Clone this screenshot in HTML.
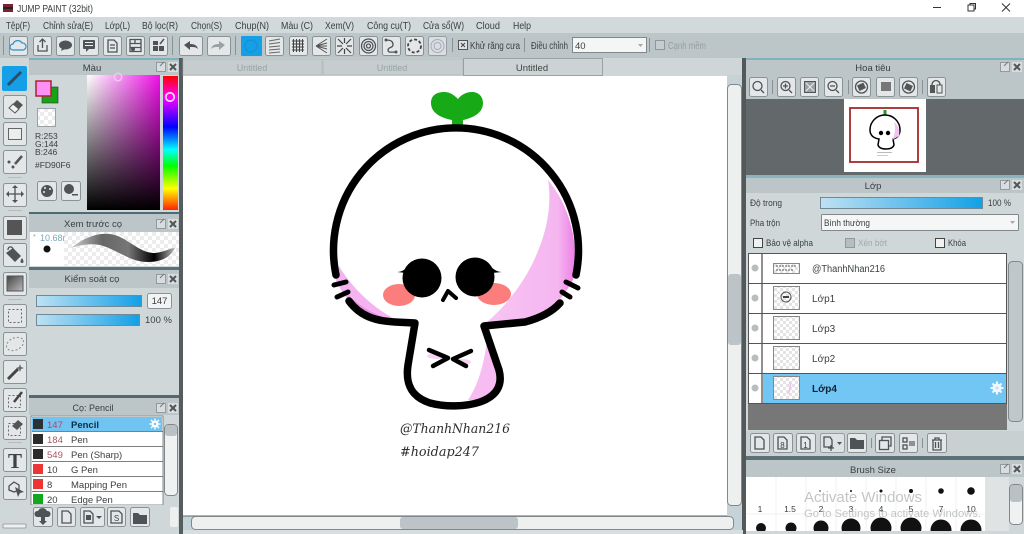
<!DOCTYPE html>
<html><head><meta charset="utf-8"><title>JUMP PAINT</title>
<style>
html,body{margin:0;padding:0;width:1024px;height:534px;overflow:hidden;background:#d0d7d8}
svg{display:block;filter:blur(.35px)}
text{font-family:"Liberation Sans","DejaVu Sans",sans-serif;font-size:10px;fill:#3a3f42}
.b{fill:#e3e7e8;stroke:#8a9295;stroke-width:1}
.i{fill:none;stroke:#4d5356;stroke-width:1.3}
.f{fill:#4d5356}
.c{text-anchor:middle}
.s{fill:none;stroke:#000;stroke-linecap:round;stroke-linejoin:round}
</style></head><body>
<svg width="1024" height="534" viewBox="0 0 1024 534" xmlns="http://www.w3.org/2000/svg">
<defs>
<pattern id="ch" width="8" height="8" patternUnits="userSpaceOnUse"><rect width="8" height="8" fill="#fff"/><rect width="4" height="4" fill="#ececec"/><rect x="4" y="4" width="4" height="4" fill="#ececec"/></pattern>
<pattern id="ch2" width="6" height="6" patternUnits="userSpaceOnUse"><rect width="6" height="6" fill="#fff"/><rect width="3" height="3" fill="#e4e4e4"/><rect x="3" y="3" width="3" height="3" fill="#e4e4e4"/></pattern>
<linearGradient id="sl" x1="0" x2="1" y1="0" y2="0"><stop offset="0" stop-color="#bfe1f3"/><stop offset="1" stop-color="#12a0e6"/></linearGradient>
<linearGradient id="sv1" x1="0" x2="1" y1="0" y2="0"><stop offset="0" stop-color="#fff"/><stop offset="1" stop-color="#f010e8"/></linearGradient>
<linearGradient id="sv2" x1="0" x2="0" y1="0" y2="1"><stop offset="0" stop-color="#000" stop-opacity="0"/><stop offset="1" stop-color="#000"/></linearGradient>
<linearGradient id="hue" x1="0" x2="0" y1="0" y2="1"><stop offset="0" stop-color="#f00"/><stop offset=".16" stop-color="#f0f"/><stop offset=".38" stop-color="#00f"/><stop offset=".55" stop-color="#0ff"/><stop offset=".67" stop-color="#0f0"/><stop offset=".84" stop-color="#ff0"/><stop offset="1" stop-color="#f20"/></linearGradient>
<linearGradient id="st" x1="0" x2="1" y1="0" y2="0"><stop offset="0" stop-color="#ccc"/><stop offset=".3" stop-color="#666"/><stop offset=".55" stop-color="#777"/><stop offset=".8" stop-color="#000"/><stop offset="1" stop-color="#bbb"/></linearGradient>
<linearGradient id="gr" x1="0" x2="1" y1="0" y2="1"><stop offset="0" stop-color="#444"/><stop offset="1" stop-color="#bbb"/></linearGradient>
<linearGradient id="pk" x1="0" x2="1" y1="0" y2="0"><stop offset="0" stop-color="#f8c4f4"/><stop offset=".8" stop-color="#f5b6f0"/><stop offset="1" stop-color="#ec80e6"/></linearGradient>
</defs>

<!-- title bar -->
<rect width="1024" height="17" fill="#fff"/>
<rect x="3" y="4" width="10" height="8" fill="#7a2230"/><rect x="3" y="7" width="10" height="2" fill="#222"/>
<text x="17" y="12" textLength="76" lengthAdjust="spacingAndGlyphs" style="font-size:10.5px" fill="#222">JUMP PAINT (32bit)</text>
<rect x="933" y="7" width="8" height="1" fill="#333"/>
<rect x="968" y="5" width="6" height="6" fill="none" stroke="#333"/><path d="M970 5V3.500H975.500V9H974" fill="none" stroke="#333"/>
<path d="M1002 3.500L1010 11.500M1010 3.500L1002 11.500" stroke="#333" fill="none"/>

<!-- menu -->
<rect y="17" width="1024" height="16" fill="#d2d9da"/>
<g>
<text x="6" y="29" textLength="24" lengthAdjust="spacingAndGlyphs">Tệp(F)</text>
<text x="43" y="29" textLength="50" lengthAdjust="spacingAndGlyphs">Chỉnh sửa(E)</text>
<text x="105" y="29" textLength="25" lengthAdjust="spacingAndGlyphs">Lớp(L)</text>
<text x="142" y="29" textLength="36" lengthAdjust="spacingAndGlyphs">Bộ lọc(R)</text>
<text x="191" y="29" textLength="31" lengthAdjust="spacingAndGlyphs">Chọn(S)</text>
<text x="235" y="29" textLength="34" lengthAdjust="spacingAndGlyphs">Chụp(N)</text>
<text x="281" y="29" textLength="32" lengthAdjust="spacingAndGlyphs">Màu (C)</text>
<text x="325" y="29" textLength="29" lengthAdjust="spacingAndGlyphs">Xem(V)</text>
<text x="367" y="29" textLength="44" lengthAdjust="spacingAndGlyphs">Công cụ(T)</text>
<text x="423" y="29" textLength="41" lengthAdjust="spacingAndGlyphs">Cửa sổ(W)</text>
<text x="476" y="29" textLength="24" lengthAdjust="spacingAndGlyphs">Cloud</text>
<text x="513" y="29" textLength="18" lengthAdjust="spacingAndGlyphs">Help</text>
</g>

<!-- toolbar -->
<rect y="33" width="1024" height="25" fill="#bcc5c8"/>
<rect x="3" y="36" width="1" height="19" fill="#8a9295"/><rect x="172" y="36" width="1" height="19" fill="#8a9295"/><rect x="235" y="36" width="1" height="19" fill="#8a9295"/>
<rect class="b" x="9.500" y="36.500" width="18" height="19" rx="2"/>
<path d="M13 50a3 3 0 0 1 0-6a5 5 0 0 1 9-1a3.500 3.500 0 0 1 1 7z" fill="none" stroke="#2a90c8" stroke-width="1.2"/>
<rect class="b" x="33.500" y="36.500" width="18" height="19" rx="2"/>
<path class="i" d="M38 45v6h9v-6M42.500 48v-9M39.500 42l3-3 3 3"/>
<rect class="b" x="56.500" y="36.500" width="18" height="19" rx="2"/>
<ellipse class="f" cx="65.500" cy="45" rx="6.500" ry="4.500"/><path class="f" d="M62 48l-1 3 4-2z"/>
<rect class="b" x="79.500" y="36.500" width="19" height="19" rx="2"/>
<rect class="f" x="83" y="40" width="12" height="9" rx="1"/><path class="f" d="M86 49l0 3 3-3z"/><rect x="85" y="42" width="8" height="1" fill="#eee"/><rect x="85" y="45" width="8" height="1" fill="#eee"/>
<rect class="b" x="103.500" y="36.500" width="18" height="19" rx="2"/>
<path class="i" d="M108 40h6l3 3v9h-9zM110 45h5M110 48h5"/>
<rect class="b" x="126.500" y="36.500" width="18" height="19" rx="2"/>
<path class="i" d="M130 39.500h11v12h-11zM130 43.500h11M130 47.500h11M135 39.500v4"/><circle class="f" cx="133" cy="49" r="2"/>
<rect class="b" x="149.500" y="36.500" width="18" height="19" rx="2"/>
<path class="f" d="M153 41h5v4h-5zM153 46h5v5h-5zM159 46h5v5h-5z"/><path d="M160 44l4-5" stroke="#4d5356" stroke-width="1.500"/>

<rect class="b" x="179.500" y="36.500" width="23" height="19" rx="2"/>
<path class="f" d="M184 45l6-4v3c4 0 7 1 8 5-2-2-4-2-8-2v3z"/>
<rect class="b" x="207.500" y="36.500" width="23" height="19" rx="2"/>
<path fill="#9aa2a5" d="M225 45l-6-4v3c-4 0-7 1-8 5 2-2 4-2 8-2v3z"/>

<rect x="241" y="36" width="21" height="20" rx="1" fill="#149fe6"/><circle cx="251" cy="46" r="6" fill="none" stroke="#1b8ccc"/>
<rect class="b" x="265.500" y="36.500" width="18" height="19" rx="2"/>
<path d="M269 41l11-2M269 44l11-1.500M269 47l11-1M269 50l11-1M269 53l11-1" stroke="#666" fill="none"/>
<rect class="b" x="289.500" y="36.500" width="18" height="19" rx="2"/>
<path d="M292 41h12M292 44h12M292 47h12M292 50h12M293.500 39v13M296.500 39v13M299.500 39v13M302.500 39v13" stroke="#444" fill="none"/>
<rect class="b" x="312.500" y="36.500" width="18" height="19" rx="2"/>
<path d="M316 46l11-7M316 46l11-3M316 46h11M316 46l11 3M316 46l11 7" stroke="#555" fill="none"/>
<rect class="b" x="335.500" y="36.500" width="18" height="19" rx="2"/>
<path d="M338 39l5 5M351 39l-5 5M338 53l5-5M351 53l-5-5M344.500 38v5M344.500 49v5M337 46h5M347 46h5" stroke="#444" stroke-width="1.200" fill="none"/>
<rect class="b" x="359.500" y="36.500" width="18" height="19" rx="2"/>
<circle cx="368.500" cy="46" r="7" class="i"/><circle cx="368.500" cy="46" r="4.500" class="i"/><circle cx="368.500" cy="46" r="2" class="i"/>
<rect class="b" x="382.500" y="36.500" width="18" height="19" rx="2"/>
<path class="i" d="M386 40c6 0 7 2 7 5s-5 2-5 5 3 2 8 2"/><circle class="f" cx="386" cy="40" r="1.500"/><circle class="f" cx="396" cy="52" r="1.500"/>
<rect class="b" x="405.500" y="36.500" width="18" height="19" rx="2"/>
<circle cx="414.500" cy="46" r="6.500" fill="none" stroke="#444" stroke-width="1.800" stroke-dasharray="3 2"/>
<rect class="b" x="428.500" y="36.500" width="18" height="19" rx="2" style="opacity:.75"/>
<circle cx="437.500" cy="46" r="6.500" fill="none" stroke="#aab" /><circle cx="437.500" cy="46" r="3.500" fill="none" stroke="#aab"/>

<rect x="452" y="38" width="1" height="14" fill="#8a9295"/>
<rect x="458.500" y="40.500" width="9" height="9" fill="#dfe4e5" stroke="#555"/><path d="M461 43l4 4M465 43l-4 4" stroke="#444"/>
<text x="470" y="49" textLength="50" lengthAdjust="spacingAndGlyphs">Khử răng cưa</text>
<rect x="524" y="38" width="1" height="14" fill="#8a9295"/>
<text x="531" y="49" textLength="37" lengthAdjust="spacingAndGlyphs">Điều chỉnh</text>
<rect x="572.500" y="37.500" width="74" height="15" fill="#f4f5f5" stroke="#80888b"/>
<text x="575" y="49" style="font-size:9.500px">40</text>
<path d="M638 44l2.500 3 2.500-3z" fill="#aaa"/>
<rect x="649" y="38" width="1" height="14" fill="#8a9295"/>
<rect x="655.500" y="40.500" width="9" height="9" fill="#c6cdd0" stroke="#8f979a"/>
<text x="668" y="49" textLength="38" lengthAdjust="spacingAndGlyphs" style="fill:#959da0">Cạnh mềm</text>

<!-- left tools column -->
<rect x="0" y="58" width="29" height="476" fill="#d0d7d8"/>
<rect x="2" y="66" width="25" height="25" rx="2" fill="#149fe6"/>
<path d="M8 85l13-13" stroke="#2c4d66" stroke-width="3"/>
<g>
<rect class="b" x="3.500" y="95.500" width="23" height="23" rx="2"/>
<path d="M9 108l8-8 6 5-8 8z" fill="#555"/><path d="M9 108l4-4 6 5-4 4z" fill="#f2f2f2" stroke="#555"/>
<rect class="b" x="3.500" y="122.500" width="23" height="23" rx="2"/>
<rect x="8.500" y="128.500" width="13" height="11" fill="#eceeee" stroke="#666"/>
<rect class="b" x="3.500" y="150.500" width="23" height="23" rx="2"/>
<path d="M22 156l-7 8" stroke="#555" stroke-width="2.500"/><circle class="f" cx="9" cy="162" r="1.500"/><circle class="f" cx="13" cy="167" r="1.500"/>
<rect x="8" y="177" width="14" height="1" fill="#bbb"/>
<rect class="b" x="3.500" y="183.500" width="23" height="23" rx="2"/>
<path class="i" d="M15 187v14M8 194h14" stroke-width="1.500"/><path class="f" d="M15 185l3 3h-6zM15 203l3-3h-6zM6 194l3-3v6zM24 194l-3-3v6z"/>
<rect x="8" y="210" width="14" height="1" fill="#bbb"/>
<rect class="b" x="3.500" y="216.500" width="23" height="23" rx="2"/>
<rect x="7" y="220" width="15" height="15" fill="#555"/>
<rect class="b" x="3.500" y="243.500" width="23" height="23" rx="2"/>
<path class="f" d="M6 253l7-5 8 8-6 6z"/><path d="M8 250c0-4 4-4 5-1" class="i"/><path class="f" d="M22 258c2 3 2 5 0 5s-2-2 0-5z"/>
<rect class="b" x="3.500" y="272.500" width="23" height="23" rx="2"/>
<rect x="7" y="276" width="16" height="15" fill="url(#gr)" stroke="#555"/>
<rect x="8" y="299" width="14" height="1" fill="#bbb"/>
<rect class="b" x="3.500" y="304.500" width="23" height="23" rx="2"/>
<rect x="8.500" y="309.500" width="13" height="13" fill="none" stroke="#666" stroke-dasharray="2 2"/>
<rect class="b" x="3.500" y="332.500" width="23" height="23" rx="2"/>
<ellipse cx="15" cy="344" rx="9" ry="6" fill="none" stroke="#888" stroke-dasharray="2 2" transform="rotate(-25 15 344)"/>
<rect class="b" x="3.500" y="360.500" width="23" height="23" rx="2"/>
<path d="M8 379l10-10" stroke="#444" stroke-width="3"/><path d="M20 364l1 3 3 1-3 1-1 3-1-3-3-1 3-1z" fill="#666"/>
<rect class="b" x="3.500" y="388.500" width="23" height="23" rx="2"/>
<rect x="8.500" y="395.500" width="12" height="12" fill="none" stroke="#666" stroke-dasharray="2 2"/><path d="M14 402l8-10" stroke="#444" stroke-width="2.500"/>
<rect class="b" x="3.500" y="416.500" width="23" height="23" rx="2"/>
<rect x="8.500" y="423.500" width="12" height="12" fill="none" stroke="#666" stroke-dasharray="2 2"/><path d="M12 426l6-6 5 4-6 6z" fill="#555"/>
<rect x="8" y="442" width="14" height="1" fill="#bbb"/>
<rect class="b" x="3.500" y="448.500" width="23" height="23" rx="2"/>
<text x="15" y="468" class="c" style="font-family:'Liberation Serif',serif;font-size:21px;font-weight:bold;fill:#3d4245">T</text>
<rect class="b" x="3.500" y="476.500" width="23" height="23" rx="2"/>
<path class="i" d="M9 486l5-4 5 3 0 5-5 2-5-2z"/><path class="f" d="M15 487l9 5-4 1-2 4z"/>
<rect x="3" y="524" width="23" height="4" rx="1" fill="#eef0f0" stroke="#8a9295" stroke-width=".8"/>
</g>

<!-- left panels -->
<rect x="29" y="58" width="150" height="476" fill="#d0d7d8"/>
<rect x="29" y="58" width="150" height="2" fill="#7fb2bd"/>
<rect x="29" y="60" width="150" height="15" fill="#bcc5c8"/>
<rect x="179" y="58" width="4" height="476" fill="#575c5f"/>
<text x="92" y="71" class="c" style="font-size:9.500px">Màu</text>
<rect x="156.500" y="62.500" width="9" height="9" fill="#d8dddf" stroke="#929a9d"/><path d="M160 66l4-4" stroke="#777"/>
<rect x="168" y="62" width="10" height="10" fill="#d8dddf"/><path d="M170 64l6 6M176 64l-6 6" stroke="#555" stroke-width="2"/>

<rect x="42" y="87" width="16" height="16" fill="#16a316" stroke="#333" stroke-width=".6"/>
<rect x="36" y="81" width="15" height="15" fill="#fd90f6" stroke="#b02030" stroke-width="1.500"/>
<rect x="37.500" y="108.500" width="18" height="18" fill="url(#ch)" stroke="#9aa2a5"/>
<g>
<text x="35" y="139" style="font-size:8.500px">R:253</text>
<text x="35" y="147" style="font-size:8.500px">G:144</text>
<text x="35" y="155" style="font-size:8.500px">B:246</text>
<text x="35" y="168" style="font-size:8.500px">#FD90F6</text>
</g>
<rect class="b" x="37.500" y="181.500" width="19" height="19" rx="2"/>
<circle class="f" cx="47" cy="191" r="6"/><circle cx="45" cy="188" r="1" fill="#eee"/><circle cx="50" cy="189" r="1" fill="#eee"/><circle cx="44" cy="192" r="1" fill="#eee"/>
<rect class="b" x="61.500" y="181.500" width="19" height="19" rx="2"/>
<circle class="f" cx="69" cy="189" r="5"/><rect x="72" y="194" width="6" height="1.500" fill="#4d5356"/>

<rect x="87" y="75" width="73" height="135" fill="url(#sv1)"/>
<rect x="87" y="75" width="73" height="135" fill="url(#sv2)"/>
<circle cx="118" cy="77" r="3.800" fill="none" stroke="#f0c8ee" stroke-width="1.500"/>
<rect x="163" y="76" width="15" height="134" fill="url(#hue)"/>
<circle cx="170" cy="97" r="4.200" fill="none" stroke="#f5d8f5" stroke-width="1.800"/>

<rect x="29" y="212" width="150" height="2" fill="#4f6a72"/>
<rect x="29" y="214" width="150" height="18" fill="#bcc5c8"/>
<text x="93" y="227" class="c" style="font-size:9.500px">Xem trước cọ</text>
<rect x="156.500" y="219.500" width="9" height="9" fill="#d8dddf" stroke="#929a9d"/><path d="M160 223l4-4" stroke="#777"/>
<rect x="168" y="219" width="10" height="10" fill="#d8dddf"/><path d="M170 221l6 6M176 221l-6 6" stroke="#555" stroke-width="2"/>
<rect x="64" y="232" width="115" height="34" fill="url(#ch)"/>
<rect x="30" y="232" width="34" height="34" fill="#fff"/>
<text x="33" y="239" style="font-size:7px;fill:#7aa">*</text>
<text x="40" y="241" style="font-size:9px;fill:#79a8b8">10.68r</text>
<circle cx="47" cy="249" r="3.500" fill="#111"/>
<path d="M71 248C85 237 100 231 115 235C130 240 140 253 155 253C165 252 170 248 175 248C170 258 160 262 148 262C130 262 118 250 100 245C90 243 80 245 71 248Z" fill="url(#st)"/>

<rect x="29" y="267" width="150" height="3" fill="#56737b"/>
<rect x="29" y="270" width="150" height="18" fill="#bcc5c8"/>
<text x="92" y="282" class="c" style="font-size:9.500px">Kiểm soát cọ</text>
<rect x="156.500" y="274.500" width="9" height="9" fill="#d8dddf" stroke="#929a9d"/><path d="M160 278l4-4" stroke="#777"/>
<rect x="168" y="274" width="10" height="10" fill="#d8dddf"/><path d="M170 276l6 6M176 276l-6 6" stroke="#555" stroke-width="2"/>
<rect x="36.500" y="295.500" width="105" height="11" fill="url(#sl)" stroke="#6e8a99"/>
<rect x="147.500" y="293.500" width="24" height="15" rx="2" fill="#f2f3f3" stroke="#8a9295"/>
<text x="159.500" y="304" class="c" style="font-size:9.500px">147</text>
<rect x="36.500" y="314.500" width="103" height="11" fill="url(#sl)" stroke="#6e8a99"/>
<text x="145" y="323" style="font-size:9.500px" textLength="27">100 %</text>

<rect x="29" y="395" width="150" height="3" fill="#56686e"/>
<rect x="29" y="398" width="150" height="17" fill="#bcc5c8"/>
<text x="93" y="411" class="c" style="font-size:9px">Cọ: Pencil</text>
<rect x="156.500" y="403.500" width="9" height="9" fill="#d8dddf" stroke="#929a9d"/><path d="M160 407l4-4" stroke="#777"/>
<rect x="168" y="403" width="10" height="10" fill="#d8dddf"/><path d="M170 405l6 6M176 405l-6 6" stroke="#555" stroke-width="2"/>

<rect x="31" y="416" width="132" height="89" fill="#fff" stroke="#6d7477" stroke-width=".8"/>
<rect x="32" y="417" width="130" height="14" fill="#70c4f2"/>
<path d="M32 431.500h131M32 446.500h131M32 461.500h131M32 476.500h131M32 491.500h131" stroke="#555" stroke-width=".8"/>
<rect x="33" y="419" width="10" height="10" fill="#2b3135"/><rect x="33" y="434" width="10" height="10" fill="#2b2b2b"/><rect x="33" y="449" width="10" height="10" fill="#2b2b2b"/>
<rect x="33" y="464" width="10" height="10" fill="#ee3535"/><rect x="33" y="479" width="10" height="10" fill="#ee3535"/><rect x="33" y="494" width="10" height="10" fill="#12a81e"/>
<text x="47" y="428" style="font-size:9.500px;fill:#b5446a">147</text><text x="71" y="428" style="font-size:9.500px;font-weight:bold;fill:#0d2c44">Pencil</text>
<text x="47" y="443" style="font-size:9.500px;fill:#a8555f">184</text><text x="71" y="443" style="font-size:9.500px">Pen</text>
<text x="47" y="458" style="font-size:9.500px;fill:#a8555f">549</text><text x="71" y="458" style="font-size:9.500px">Pen (Sharp)</text>
<text x="47" y="473" style="font-size:9.500px">10</text><text x="71" y="473" style="font-size:9.500px">G Pen</text>
<text x="47" y="488" style="font-size:9.500px">8</text><text x="71" y="488" style="font-size:9.500px">Mapping Pen</text>
<text x="47" y="503" style="font-size:9.500px">20</text><text x="71" y="503" style="font-size:9.500px">Edge Pen</text>
<circle cx="155" cy="424" r="3.500" fill="#fff"/><path d="M155 418.500v11M149.500 424h11M151 420l8 8M159 420l-8 8" stroke="#fff" stroke-width="1.300"/><circle cx="155" cy="424" r="1.200" fill="#70c4f2"/>
<rect x="164.500" y="424.500" width="13" height="71" rx="4" fill="#f0f1f1" stroke="#80888b"/>
<rect x="165" y="425" width="12" height="11" rx="3" fill="#b9c1c4"/>
<rect x="170" y="507" width="8" height="20" rx="2" fill="#eef0f0"/>
<rect x="29" y="505" width="150" height="1" fill="#d0d7d8"/>
<rect class="b" x="33.500" y="507.500" width="19" height="19" rx="2"/>
<path class="f" d="M37 517a3 3 0 0 1 1-6a5 5 0 0 1 9 0a3 3 0 0 1 1 6z"/><path class="f" d="M41 517h4v4h2l-4 4-4-4h2z"/>
<rect class="b" x="57.500" y="507.500" width="18" height="19" rx="2"/>
<path class="i" d="M62 511h6l3 3v9h-9z"/>
<rect class="b" x="80.500" y="507.500" width="24" height="19" rx="2"/>
<path class="i" d="M84 511h6l3 3v9h-9z"/><rect class="f" x="86" y="515" width="5" height="5"/><path class="f" d="M96 516h6l-3 3z"/>
<rect class="b" x="107.500" y="507.500" width="18" height="19" rx="2"/>
<path class="i" d="M111 511h8l3 3v9h-11z"/><text x="116.500" y="521" class="c" style="font-size:8px">S</text>
<rect class="b" x="130.500" y="507.500" width="19" height="19" rx="2"/>
<path class="f" d="M133 513h5l2 2h7v9h-14z"/>

<!-- tabs & center -->
<rect x="183" y="58" width="563" height="476" fill="#ced6d7"/>
<rect x="183" y="59" width="139" height="16" fill="#c5cdcf" stroke="#a9b1b4" stroke-width=".6"/>
<rect x="323" y="59" width="140" height="16" fill="#c5cdcf" stroke="#a9b1b4" stroke-width=".6"/>
<rect x="463.500" y="58.500" width="139" height="17" fill="#cbd3d5" stroke="#8f979a" stroke-width=".8"/>
<text x="252" y="71" class="c" style="font-size:9px;fill:#9aa2a5">Untitled</text>
<text x="392" y="71" class="c" style="font-size:9px;fill:#9aa2a5">Untitled</text>
<text x="532" y="71" class="c" style="font-size:9.500px;fill:#444">Untitled</text>
<rect x="727" y="75" width="15" height="456" fill="#c7d2d5"/>
<rect x="183" y="76" width="544" height="440" fill="#fff"/>
<rect x="183" y="516" width="561" height="16" fill="#c2d4d9"/>
<rect x="183" y="515.500" width="544" height="1" fill="#666"/>
<rect x="742" y="58" width="4" height="476" fill="#53585b"/>
<rect x="727.500" y="84.500" width="14" height="421" rx="4" fill="#eeefef" stroke="#80888b"/>
<rect x="728" y="274" width="13" height="71" rx="3" fill="#bdc4c7"/>
<rect x="191.500" y="516.500" width="542" height="13" rx="4" fill="#eeefef" stroke="#80888b"/>
<rect x="400" y="517" width="118" height="12" rx="3" fill="#bdc4c7"/>
<rect x="183" y="530" width="560" height="4" fill="#d6dedf"/>

<!-- artwork -->
<path fill="url(#pk)" d="M548 180C552 205 547 232 535 258C524 283 505 307 487 322L535 318C553 309 563 298 573 280C579 250 573 210 548 180Z"/>
<path fill="#f5b4ef" d="M339 266C350 285 372 308 397 320L372 316C355 310 342 295 336 280Z"/>
<path fill="#eb90e6" d="M345 292C355 303 368 311 385 318L370 315C358 309 350 301 345 292Z"/>
<path fill="#f7bdf2" d="M487 340C484 365 478 385 468 400L487 400C499 390 503 375 498 355Z"/>
<ellipse cx="437" cy="356" rx="10" ry="3" fill="#f6d3f3"/><ellipse cx="463" cy="362" rx="8" ry="3" fill="#f6d3f3"/>
<path fill="#18aa16" d="M452 126V120C441 118 431 113 431 103C431 95 437 92 444 92C450 92 454 95 458 99C461 95 466 92 472 92C478 92 483 96 483 103C483 113 473 118 463 120V126Z"/>
<ellipse cx="399" cy="295" rx="16" ry="11" fill="#fb7d7c"/>
<ellipse cx="494" cy="294" rx="17" ry="11" fill="#fb7d7c"/>
<g class="s">
<path class="s" stroke-width="7.500" d="M336 275A122.500 122.500 0 1 1 576 275"/>
<path class="s" stroke-width="5" d="M334 285L346 282M337 297L348 292M566 282L578 288M562 292L570 297"/>
<path class="s" stroke-width="7.500" d="M349 301C360 316 375 321 395 322L415 323L408 365C405 385 412 397 430 403C445 407 465 407 480 402C497 396 503 385 499 370L484 326L525 322C540 318 552 312 560 303"/>
</g>
<circle cx="422" cy="278" r="19.500" fill="#000"/>
<circle cx="475" cy="277" r="19.500" fill="#000"/>
<path d="M397 272C402 272 406 269 409 265L406 273Z" fill="#000"/>
<path d="M502 272C497 272 493 269 489 265L492 273Z" fill="#000"/>
<path class="s" stroke-width="4" d="M443 300L448 291L456 298"/>
<path class="s" stroke-width="4.500" d="M429 350L448 358L433 366M471 351L453 359L466 366"/>
<text x="400" y="433" textLength="110" lengthAdjust="spacingAndGlyphs" style="font-family:'DejaVu Serif','Liberation Serif',serif;font-style:italic;font-size:13px;fill:#2e2e2e">@ThanhNhan216</text>
<text x="400" y="456" textLength="79" lengthAdjust="spacingAndGlyphs" style="font-family:'DejaVu Serif','Liberation Serif',serif;font-style:italic;font-size:13px;fill:#2e2e2e">#hoidap247</text>

<!-- right panels -->
<rect x="746" y="58" width="278" height="476" fill="#d0d7d8"/>
<rect x="746" y="58" width="278" height="2" fill="#7fb2bd"/>
<rect x="746" y="60" width="278" height="39" fill="#bcc5c8"/>
<text x="873" y="71" class="c" style="font-size:9.500px">Hoa tiêu</text>
<rect x="1000.500" y="62.500" width="9" height="9" fill="#d8dddf" stroke="#929a9d"/><path d="M1004 66l4-4" stroke="#777"/>
<rect x="1012" y="62" width="10" height="10" fill="#d8dddf"/><path d="M1014 64l6 6M1020 64l-6 6" stroke="#555" stroke-width="2"/>

<rect class="b" x="749.500" y="77.500" width="18" height="19" rx="2"/><circle class="i" cx="757.500" cy="86" r="4.500"/><path class="i" d="M761 90l3 3" stroke-width="2"/>
<rect x="772" y="80" width="1" height="14" fill="#8a9295"/>
<rect class="b" x="777.500" y="77.500" width="18" height="19" rx="2"/><circle class="i" cx="785.500" cy="86" r="4.500"/><path class="i" d="M789 90l3 3M783 86h5M785.500 83.500v5" />
<rect class="b" x="800.500" y="77.500" width="18" height="19" rx="2"/><rect x="804.500" y="81.500" width="11" height="11" fill="#9aa2a5" stroke="#555"/><path d="M806 83l8 8M814 83l-8 8" stroke="#eee"/>
<rect class="b" x="824.500" y="77.500" width="18" height="19" rx="2"/><circle class="i" cx="832.500" cy="86" r="4.500"/><path class="i" d="M836 90l3 3M830 86h5"/>
<rect x="848" y="80" width="1" height="14" fill="#8a9295"/>
<rect class="b" x="852.500" y="77.500" width="18" height="19" rx="2"/><circle class="i" cx="861.500" cy="87" r="6" stroke-width="2"/><rect x="858" y="84" width="7" height="6" fill="#555" transform="rotate(-25 861 87)"/>
<rect class="b" x="876.500" y="77.500" width="18" height="19" rx="2"/><rect x="881" y="82" width="10" height="9" fill="#777"/>
<rect class="b" x="899.500" y="77.500" width="18" height="19" rx="2"/><circle class="i" cx="908.500" cy="87" r="6" stroke-width="2"/><rect x="905" y="84" width="7" height="6" fill="#555" transform="rotate(25 908 87)"/>
<rect x="922" y="80" width="1" height="14" fill="#8a9295"/>
<rect class="b" x="927.500" y="77.500" width="18" height="19" rx="2"/><rect x="930" y="85" width="5" height="8" fill="#555"/><rect x="937" y="85" width="5" height="8" fill="none" stroke="#555"/><path class="i" d="M932 85c0-6 8-6 8 0"/>

<rect x="746" y="99" width="278" height="76" fill="#63686a"/>
<rect x="844" y="99" width="82" height="73" fill="#fff"/>
<rect x="850" y="108" width="68" height="54" fill="#fff" stroke="#a52a2a" stroke-width="1.800"/>
<path d="M885 110v5" stroke="#2a9a2a" stroke-width="3"/>
<path d="M870 130a15 15 0 0 1 30 0c0 5-3 8-7 9l1 6c-1 3-4 4-8 4s-7-1-8-4l1-6c-6-1-9-4-9-9z" fill="#fff" stroke="#000" stroke-width="1.500"/>
<path d="M894 122c5 4 6 10 5 14l-7 4c3-5 4-12 2-18z" fill="#f3c2ef"/>
<circle cx="881" cy="133" r="2.200"/><circle cx="888" cy="133" r="2.200"/>
<rect x="877" y="152" width="15" height="1" fill="#bbb"/><rect x="877" y="155" width="11" height="1" fill="#ccc"/>

<rect x="746" y="175" width="278" height="3" fill="#86b5c0"/>
<rect x="746" y="178" width="278" height="15" fill="#bcc5c8"/>
<text x="873" y="189" class="c" style="font-size:9.500px">Lớp</text>
<rect x="1000.500" y="180.500" width="9" height="9" fill="#d8dddf" stroke="#929a9d"/><path d="M1004 184l4-4" stroke="#777"/>
<rect x="1012" y="180" width="10" height="10" fill="#d8dddf"/><path d="M1014 182l6 6M1020 182l-6 6" stroke="#555" stroke-width="2"/>
<text x="750" y="206" textLength="32" lengthAdjust="spacingAndGlyphs" style="font-size:9.500px">Độ trong</text>
<rect x="820.500" y="197.500" width="162" height="11" fill="url(#sl)" stroke="#6e8a99"/>
<text x="988" y="206" textLength="23" lengthAdjust="spacingAndGlyphs" style="font-size:9.500px">100 %</text>
<text x="750" y="226" textLength="30" lengthAdjust="spacingAndGlyphs" style="font-size:9.500px">Pha trộn</text>
<rect x="821.500" y="214.500" width="197" height="16" rx="1" fill="#f5f6f6" stroke="#80888b"/>
<text x="824" y="226" textLength="46" lengthAdjust="spacingAndGlyphs" style="font-size:9.500px">Bình thường</text>
<path d="M1010 221l2.500 3 2.500-3z" fill="#aaa"/>
<rect x="753.500" y="238.500" width="9" height="9" fill="#f0f2f2" stroke="#444"/>
<text x="766" y="246" textLength="47" lengthAdjust="spacingAndGlyphs" style="font-size:9.500px">Bảo vệ alpha</text>
<rect x="845.500" y="238.500" width="9" height="9" fill="#b6bdc0" stroke="#91999c"/>
<text x="858" y="246" textLength="29" lengthAdjust="spacingAndGlyphs" style="font-size:9.500px;fill:#a0a8ab">Xén bớt</text>
<rect x="935.500" y="238.500" width="9" height="9" fill="#f0f2f2" stroke="#444"/>
<text x="948" y="246" textLength="18" lengthAdjust="spacingAndGlyphs" style="font-size:9.500px">Khóa</text>

<rect x="748" y="253" width="259" height="177" fill="#777"/>
<rect x="748" y="253" width="259" height="150" fill="#fff"/>
<rect x="763" y="374" width="244" height="29" fill="#72c6f3"/>
<path d="M748 253.500H1007M748 283.500H1007M748 313.500H1007M748 343.500H1007M748 373.500H1007M748 403.500H1007M748.500 253V403M1006.500 253V403" stroke="#555"/>
<path d="M762 253V403" stroke="#555" stroke-width="1.300"/>
<g fill="#b8bdbf"><circle cx="755" cy="268" r="3.500"/><circle cx="755" cy="298" r="3.500"/><circle cx="755" cy="328" r="3.500"/><circle cx="755" cy="358" r="3.500"/><circle cx="755" cy="388" r="3.500"/></g>
<rect x="773.500" y="263.500" width="26" height="10" fill="url(#ch2)" stroke="#888"/><path d="M776 266h21M776 270h18" stroke="#555" stroke-dasharray="2 1"/>
<rect x="773.500" y="286.500" width="26" height="23" fill="url(#ch2)" stroke="#888"/><circle cx="786" cy="297" r="5" fill="none" stroke="#555"/><rect x="783" y="296" width="6" height="2" fill="#444"/>
<rect x="773.500" y="316.500" width="26" height="23" fill="url(#ch2)" stroke="#888"/>
<rect x="773.500" y="346.500" width="26" height="23" fill="url(#ch2)" stroke="#888"/>
<rect x="773.500" y="376.500" width="26" height="23" fill="url(#ch2)" stroke="#888"/><path d="M790 382c1 4 0 8-2 12" stroke="#f5c4f0" stroke-width="2" fill="none"/>
<text x="812" y="272" textLength="73" lengthAdjust="spacingAndGlyphs" style="font-size:10px">@ThanhNhan216</text>
<text x="812" y="302" style="font-size:10px">Lớp1</text>
<text x="812" y="332" style="font-size:10px">Lớp3</text>
<text x="812" y="362" style="font-size:10px">Lớp2</text>
<text x="812" y="392" style="font-size:10px;font-weight:bold;fill:#0d2233">Lớp4</text>
<circle cx="997" cy="388" r="4.500" fill="#eef8fd"/><path d="M997 381.500v13M990.500 388h13M992.500 383.500l9 9M1001.500 383.500l-9 9" stroke="#eef8fd" stroke-width="2"/><circle cx="997" cy="388" r="1.500" fill="#b9e2f8"/>
<rect x="1008.500" y="261.500" width="14" height="160" rx="4" fill="#bfc7ca" stroke="#80888b"/>
<rect x="746" y="431" width="278" height="25" fill="#c8d0d2"/>
<rect class="b" x="750.500" y="433.500" width="19" height="19" rx="2"/><path class="i" d="M755 437h6l3 3v9h-9z"/>
<rect class="b" x="773.500" y="433.500" width="19" height="19" rx="2"/><path class="i" d="M778 437h6l3 3v9h-9z"/><text x="782.500" y="448" class="c" style="font-size:8px">8</text>
<rect class="b" x="796.500" y="433.500" width="19" height="19" rx="2"/><path class="i" d="M801 437h6l3 3v9h-9z"/><text x="805.500" y="448" class="c" style="font-size:8px">1</text>
<rect class="b" x="820.500" y="433.500" width="24" height="19" rx="2" style="opacity:.8"/><path class="i" d="M824 437h6l2 3v7h-8z"/><path class="i" d="M831 445v6M828 448h6"/><path class="f" d="M837 442h5l-2.500 3z"/>
<rect class="b" x="847.500" y="433.500" width="19" height="19" rx="2"/><path class="f" d="M850 438h5l2 2h7v9h-14z"/>
<rect x="871" y="438" width="1" height="10" fill="#8a9295"/>
<rect class="b" x="875.500" y="433.500" width="19" height="19" rx="2"/><rect x="879.500" y="440.500" width="9" height="9" class="i"/><path class="i" d="M882 440v-3h9v9h-3"/>
<rect class="b" x="899.500" y="433.500" width="18" height="19" rx="2"/><rect x="903" y="438" width="4" height="4" class="i" stroke-width="1"/><rect x="903" y="445" width="4" height="4" class="i" stroke-width="1"/><rect x="909" y="441" width="6" height="5" fill="#8a9295"/>
<rect x="922" y="438" width="1" height="10" fill="#8a9295"/>
<rect class="b" x="927.500" y="433.500" width="19" height="19" rx="2"/><path class="i" d="M932 440h10M933 440v10h8v-10M935.500 442v6M938.500 442v6M935 440v-2h4v2" stroke-width="1.400"/>

<rect x="746" y="456" width="278" height="4" fill="#5b7077"/>
<rect x="746" y="460" width="278" height="17" fill="#bcc5c8"/>
<text x="873" y="473" class="c" style="font-size:9.500px">Brush Size</text>
<rect x="1000.500" y="464.500" width="9" height="9" fill="#d8dddf" stroke="#929a9d"/><path d="M1004 468l4-4" stroke="#777"/>
<rect x="1012" y="464" width="10" height="10" fill="#d8dddf"/><path d="M1014 466l6 6M1020 466l-6 6" stroke="#555" stroke-width="2"/>
<rect x="746" y="477" width="239" height="54" fill="#fff"/>
<rect x="985" y="477" width="24" height="54" fill="#dfe3e4"/>
<path d="M776 477v54M806 477v54M836 477v54M866 477v54M896 477v54M926 477v54M956 477v54M746 514h239" stroke="#f1f1f1"/>
<g fill="#111">
<circle cx="820" cy="491" r=".7"/><circle cx="851" cy="491" r="1"/><circle cx="881" cy="491" r="1.500"/><circle cx="911" cy="491" r="2"/><circle cx="941" cy="491" r="2.800"/><circle cx="971" cy="491" r="3.800"/>
<circle cx="761" cy="528" r="5"/><circle cx="791" cy="528" r="5.500"/><circle cx="821" cy="528" r="7.500"/><circle cx="851" cy="528" r="9.500"/><circle cx="881" cy="528" r="10.500"/><circle cx="911" cy="528" r="10.500"/><circle cx="941" cy="530" r="10.500"/><circle cx="971" cy="530" r="10.500"/>
</g>
<g>
<text x="760" y="512" class="c" style="font-size:8.500px">1</text><text x="790" y="512" class="c" style="font-size:8.500px">1.5</text><text x="821" y="512" class="c" style="font-size:8.500px">2</text><text x="851" y="512" class="c" style="font-size:8.500px">3</text><text x="881" y="512" class="c" style="font-size:8.500px">4</text><text x="911" y="512" class="c" style="font-size:8.500px">5</text><text x="941" y="512" class="c" style="font-size:8.500px">7</text><text x="971" y="512" class="c" style="font-size:8.500px">10</text>
</g>
<rect x="1009.500" y="484.500" width="13" height="40" rx="4" fill="#f0f1f1" stroke="#80888b"/>
<rect x="1010" y="485" width="12" height="17" rx="3" fill="#b9c1c4"/>
<rect x="746" y="531" width="278" height="3" fill="#d0d7d8"/>
<text x="804" y="502" textLength="118" lengthAdjust="spacingAndGlyphs" style="font-size:15px;fill:#b8bcbe;opacity:.85">Activate Windows</text>
<text x="804" y="517" textLength="177" lengthAdjust="spacingAndGlyphs" style="font-size:11px;fill:#b8bcbe;opacity:.85">Go to Settings to activate Windows.</text>
</svg>
</body></html>
